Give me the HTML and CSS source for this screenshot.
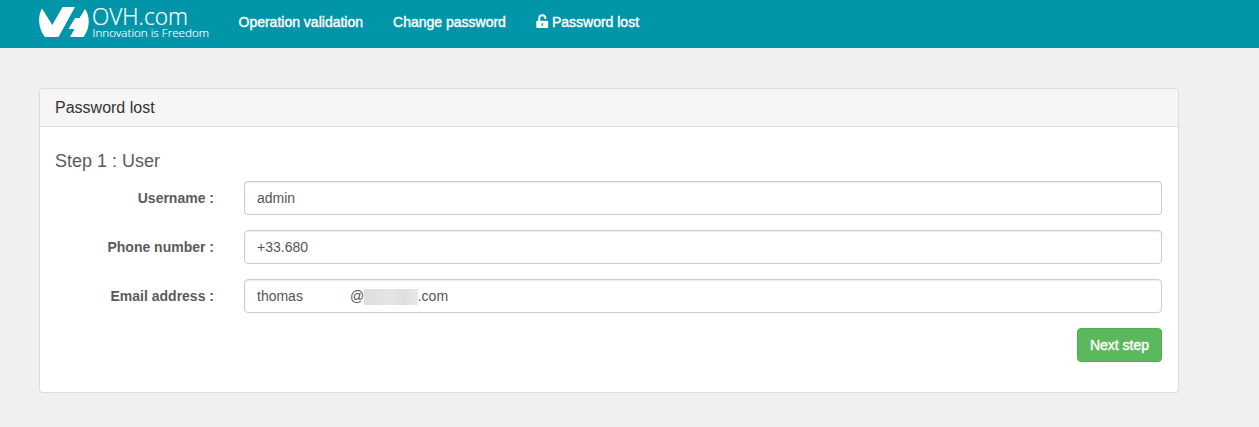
FILE: index.html
```html
<!DOCTYPE html>
<html lang="en">
<head>
<meta charset="utf-8">
<title>Password lost</title>
<link rel="stylesheet" href="styles.css">
</head>
<body>
<header class="navbar">
  <a class="brand">
    <svg width="180" height="48" viewBox="0 0 180 48" fill="#fff">
      <path d="M3 8.500C-1 15-1.500 28 6 37H19.500L36 7H23.500L13.300 25Z"/>
      <path d="M46 9L40.500 18H36L29.500 29H35.500L31 37H44.500C51.500 28 51 16 46 9Z"/>
      <text class="logo-name" x="53" y="25" textLength="96" lengthAdjust="spacingAndGlyphs">OVH.com</text>
      <text class="logo-tag" x="53.500" y="36.500" textLength="116.500" lengthAdjust="spacingAndGlyphs">Innovation is Freedom</text>
    </svg>
  </a>
  <nav class="links">
    <a>Operation validation</a>
    <a>Change password</a>
    <a class="with-icon"><svg class="lock" width="13" height="15" viewBox="0 0 13 15"><path d="M3.200 8V4.300a3.100 3.100 0 0 1 6.200 0V5" fill="none" stroke="#fff" stroke-width="1.900"/><path fill="#fff" fill-rule="evenodd" d="M1.300 6.800h9.900q1 0 1 1v5.200q0 1-1 1H1.300q-1 0-1-1V7.800q0-1 1-1ZM5.600 9.300v2.500h1.500V9.300Z"/></svg>Password lost</a>
  </nav>
</header>
<main class="panel">
  <h1 class="panel-title">Password lost</h1>
  <form class="panel-body">
    <h2 class="step">Step 1 : User</h2>
    <div class="row"><label>Username :</label><div class="field">admin</div></div>
    <div class="row"><label>Phone number :</label><div class="field">+33.680</div></div>
    <div class="row"><label>Email address :</label><div class="field"><span class="local">thomas</span>@<span class="mask"></span>.com</div></div>
    <div class="actions"><button class="next" type="button">Next step</button></div>
  </form>
</main>
</body>
</html>
```
FILE: styles.css
```css
* { box-sizing: border-box; }
body {
  margin: 0;
  background: #f0f0f0;
  color: #5a5a5a;
  font: 14px/20px "Liberation Sans", Arial, sans-serif;
}
.navbar {
  display: flex;
  height: 48px;
  padding-left: 39px;
  background: #0095a9;
  color: #fff;
}
.brand { width: 199.5px; }
.brand svg { display: block; }
.logo-name {
  font: 300 23px "Open Sans", sans-serif;
  stroke: #fff;
  stroke-width: 0.2px;
}
.logo-tag { font: 300 11px "Open Sans", sans-serif; stroke: #fff; stroke-width: 0.15px; }
.links {
  display: flex;
  gap: 30px;
  padding-top: 12px;
  -webkit-text-stroke: 0.4px #fff;
}
.with-icon { display: flex; }
.lock { margin: 2px 3px 0 0; }
.panel {
  width: 1140px;
  height: 305px;
  margin: 40px 0 0 39px;
  background: #fff;
  border: 1px solid #ddd;
  border-radius: 4px;
  box-shadow: 0 1px 1px rgba(0, 0, 0, 0.05);
}
.panel-title {
  height: 38px;
  margin: 0;
  padding: 10px 15px;
  background: #f5f5f5;
  border-bottom: 1px solid #ddd;
  border-radius: 3px 3px 0 0;
  color: #333;
  font-size: 16px;
  font-weight: 400;
  line-height: 17px;
}
.panel-body { padding: 24px 16px 0 15px; }
.step {
  margin: 0 0 10px;
  font-size: 18px;
  font-weight: 400;
  line-height: 20px;
}
.row {
  display: flex;
  margin-bottom: 15px;
}
.row label {
  width: 159px;
  margin-right: 30px;
  padding-top: 7px;
  font-weight: 700;
  text-align: right;
}
.field {
  display: flex;
  flex: 1;
  height: 34px;
  padding: 6px 12px;
  border: 1px solid #ccc;
  border-radius: 4px;
  box-shadow: inset 0 1px 1px rgba(0, 0, 0, 0.075);
  color: #555;
}
.local { width: 93px; }
.mask {
  width: 54px;
  height: 16px;
  margin: 3px -0.5px 0 0;
  background: linear-gradient(90deg, #dedede, #e5e5e5 45%, #dfdfdf 75%, #e9e9e9);
}
.actions {
  display: flex;
  justify-content: flex-end;
}
.next {
  width: 85px;
  height: 34px;
  padding: 0;
  background: #5cb85c;
  border: 1px solid #4cae4c;
  border-radius: 4px;
  color: #fff;
  font: inherit;
  -webkit-text-stroke: 0.4px #fff;
}
```
